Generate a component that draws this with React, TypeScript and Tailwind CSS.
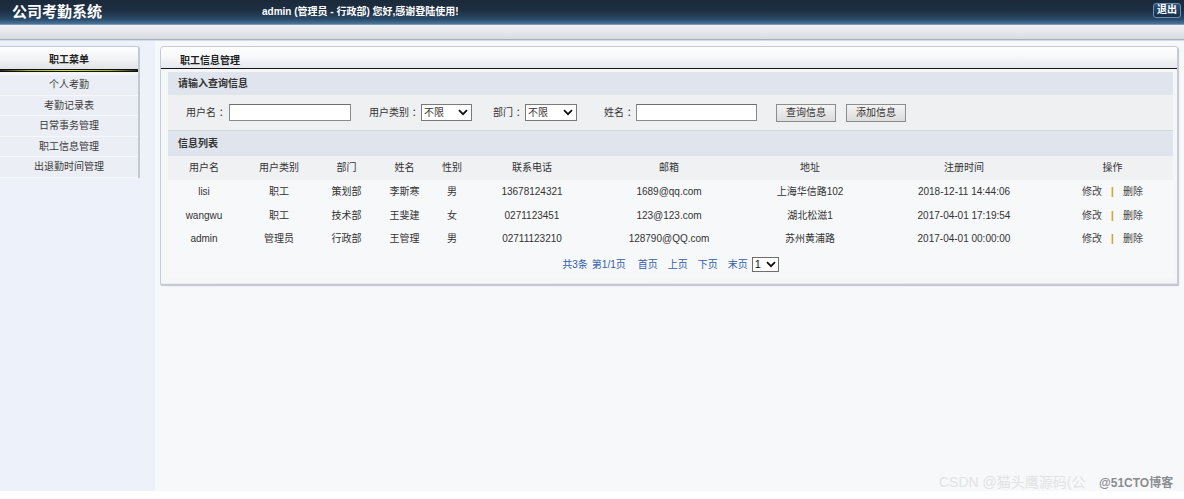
import React from "react";

const rows = [
  ["lisi", "职工", "策划部", "李斯寒", "男", "13678124321", "1689@qq.com", "上海华信路102", "2018-12-11 14:44:06"],
  ["wangwu", "职工", "技术部", "王斐建", "女", "0271123451", "123@123.com", "湖北松滋1", "2017-04-01 17:19:54"],
  ["admin", "管理员", "行政部", "王管理", "男", "02711123210", "128790@QQ.com", "苏州黄浦路", "2017-04-01 00:00:00"],
];

const heads = ["用户名", "用户类别", "部门", "姓名", "性别", "联系电话", "邮箱", "地址", "注册时间", "操作"];

const gridCols = "grid grid-cols-[72px_78px_57px_59px_36px_124px_150px_132px_176px_1fr]";

function Chevron() {
  return (
    <svg width="10" height="7" viewBox="0 0 10 7" className="mr-[3px]">
      <polyline points="1,1.2 5,5.2 9,1.2" fill="none" stroke="#111" strokeWidth="1.8" />
    </svg>
  );
}

function FakeSelect({ value, w }: { value: string; w: string }) {
  return (
    <div className={`${w} h-[17px] flex items-center justify-between border border-[#7a7a7a] bg-white pl-[2px] text-[10px] leading-none`}>
      <span>{value}</span>
      <Chevron />
    </div>
  );
}

function Btn({ label }: { label: string }) {
  return (
    <div className="w-[60px] h-[18px] flex items-center justify-center border border-[#8c8c8c] bg-[linear-gradient(to_bottom,#f4f4f4,#dcdcdc)] text-[10px] text-[#333] leading-none">
      {label}
    </div>
  );
}

export default function App() {
  return (
    <div className="relative w-[1184px] h-[491px] flex flex-col font-['Liberation_Sans','Noto_Sans_CJK_SC',sans-serif] text-[#333]">
      {/* top header */}
      <div className="h-[24px] flex items-center bg-[linear-gradient(to_bottom,#1b2a3a_0%,#1d2f43_45%,#2b4a68_80%,#4a77a0_100%)]">
        <div className="w-[262px] pl-[12px] text-[15px] font-bold text-white leading-none pb-[3px] font-['Noto_Sans_CJK_SC',sans-serif]">
          公司考勤系统
        </div>
        <div className="text-[10px] font-bold text-white leading-none">admin (管理员 - 行政部) 您好,感谢登陆使用!</div>
        <div className="ml-auto mr-[3px] mb-[4px] w-[28px] h-[15px] flex items-center justify-center rounded-[3px] border border-[#6d8fb5] bg-[linear-gradient(to_bottom,#2f5278,#16304e)] text-[10px] font-bold text-white leading-none">
          退出
        </div>
      </div>
      <div className="h-[1px] bg-[#7c98b5]" />
      <div className="h-[14px] bg-[linear-gradient(to_bottom,#f1f2f4,#e3e5e9_60%,#d6dae0)]" />
      <div className="h-[1px] bg-[#a7b2c0]" />
      <div className="h-[1px] bg-[#d5dce7]" />

      {/* body */}
      <div className="flex flex-1 min-h-0">
        {/* sidebar column */}
        <div className="w-[155px] bg-[#edf1fa] pt-[5px]">
          <div className="w-[140px] border-t border-r-2 border-[#c3c9d3] rounded-tr-[3px] bg-[#ebeef4]">
            <div className="h-[22px] flex items-center justify-center bg-[linear-gradient(to_bottom,#ffffff,#f3f4f6_50%,#e0e3e8)] text-[10px] font-bold text-[#222] leading-none pt-[3px]">
              职工菜单
            </div>
            <div className="h-[1px] bg-[#111]" />
            <div className="h-[1px] bg-[linear-gradient(to_right,#222,#9bb81c_20%,#d3e22c_50%,#9bb81c_80%,#222)]" />
            <div className="h-[1px] bg-[#111]" />
            <div className="h-[3px] bg-[#f3f5f9]" />
            {["个人考勤", "考勤记录表", "日常事务管理", "职工信息管理", "出退勤时间管理"].map((t) => (
              <div
                key={t}
                className="h-[20.5px] flex items-center justify-center border-b border-[#f6f7fa] text-[10px] text-[#3a3a3a] leading-none pt-[1px]"
              >
                {t}
              </div>
            ))}
          </div>
        </div>

        {/* content column */}
        <div className="flex-1 bg-[#f7f8fa] pt-[5px] pl-[5px] pr-[6px]">
          <div className="rounded-tl-[4px] rounded-tr-[3px] border border-[#c4cbd6] bg-[#f9fafb] shadow-[1px_1px_1px_rgba(120,130,145,0.45)]">
            <div className="h-[21px] flex items-end pl-[19px] bg-[linear-gradient(to_bottom,#ffffff,#f6f7f9_50%,#e4e8ed)] rounded-tl-[4px] rounded-tr-[3px]">
              <span className="text-[10px] font-bold text-[#1e1e1e] leading-[12px] pb-[1px]">职工信息管理</span>
            </div>
            <div className="h-[1px] bg-[#151515]" />
            <div className="px-[7px] pr-[4px] pt-[3px] pb-[5px] bg-[#f5f6f8]">
              {/* query header */}
              <div className="h-[23px] flex items-center pl-[10px] bg-[#e0e4ec] text-[10px] font-bold text-[#333] leading-none pt-[1px]">
                请输入查询信息
              </div>
              {/* form row */}
              <div className="h-[36px] flex items-center pl-[18px] bg-[#eff0f2] border-b border-[#d3d7de] text-[10px] leading-none whitespace-nowrap">
                <span className="w-[43px] shrink-0">用户名 ：</span>
                <div className="w-[122px] h-[17px] shrink-0 border border-[#8a8a8a] border-t-[#6e6e6e] bg-white" />
                <span className="w-[52px] ml-[18px] shrink-0">用户类别 ：</span>
                <FakeSelect value="不限" w="w-[51px] shrink-0" />
                <span className="w-[32px] ml-[21px] shrink-0">部门 ：</span>
                <FakeSelect value="不限" w="w-[52px] shrink-0" />
                <span className="w-[32px] ml-[27px] shrink-0">姓名 ：</span>
                <div className="w-[121px] h-[17px] shrink-0 border border-[#8a8a8a] border-t-[#6e6e6e] bg-white" />
                <div className="ml-[19px]">
                  <Btn label="查询信息" />
                </div>
                <div className="ml-[10px]">
                  <Btn label="添加信息" />
                </div>
              </div>
              {/* list header */}
              <div className="h-[25px] flex items-center pl-[10px] bg-[#e0e4ec] text-[10px] font-bold text-[#333] leading-none pt-[1px]">
                信息列表
              </div>
              <div className={`${gridCols} h-[23.5px] items-center bg-[#f0f1f3] text-[10px] leading-none`}>
                {heads.map((h) => (
                  <div key={h} className="text-center">
                    {h}
                  </div>
                ))}
              </div>
              {rows.map((r) => (
                <div key={r[0]} className={`${gridCols} h-[23.5px] items-center bg-[#f7f8fa] text-[10px] leading-none pt-[2px]`}>
                  {r.map((c, i) => (
                    <div key={i} className="text-center whitespace-nowrap">
                      {c}
                    </div>
                  ))}
                  <div className="flex items-center justify-center gap-[9px] text-[#444]">
                    <span>修改</span>
                    <span className="text-[#d09a20] font-bold">|</span>
                    <span>删除</span>
                  </div>
                </div>
              ))}
              {/* pagination */}
              <div className="h-[28px] flex items-center justify-center bg-[#f7f8fa] text-[10px] text-[#2f5fab] leading-none pt-[1px]">
                <span>共3条</span>
                <span className="ml-[4px]">第1/1页</span>
                <span className="ml-[12px]">首页</span>
                <span className="ml-[10px]">上页</span>
                <span className="ml-[10px]">下页</span>
                <span className="ml-[10px]">末页</span>
                <div className="ml-[4px] w-[27px] h-[15px] flex items-center justify-between border border-[#6e6e6e] bg-white pl-[2px] text-[11px] text-[#111]">
                  <span>1</span>
                  <svg width="10" height="7" viewBox="0 0 10 7" className="mr-[2px]">
                    <polyline points="1,1.2 5,5.2 9,1.2" fill="none" stroke="#111" strokeWidth="1.8" />
                  </svg>
                </div>
              </div>
            </div>
            <div className="h-[1px] bg-[linear-gradient(to_right,#e8ebef,#dfe3e8)]" />
          </div>
        </div>
      </div>

      {/* watermark overlay */}
      <div className="absolute left-[939px] top-[475px] text-[14px] text-[#e1e3e6] whitespace-nowrap leading-none">
        CSDN @猫头鹰源码(公
      </div>
      <div className="absolute left-[1099px] top-[477px] text-[12px] font-bold text-[#8a8c90] whitespace-nowrap leading-none [text-shadow:0_0_2px_#fff]">
        @51CTO博客
      </div>
    </div>
  );
}
